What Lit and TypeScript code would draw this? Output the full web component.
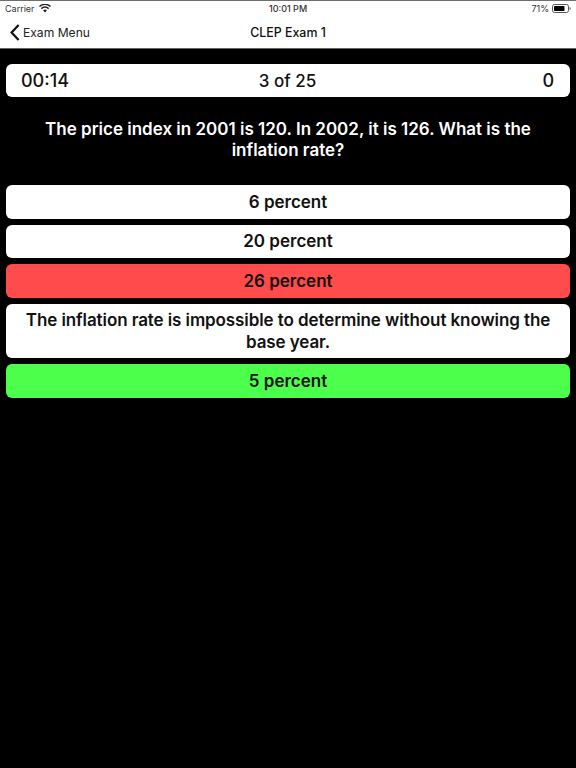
import { LitElement, html, css } from "lit";
import { customElement } from "lit/decorators.js";

@customElement("app-root")
export class AppRoot extends LitElement {
  static styles = css`
    :host { display: block; width: 576px; height: 768px; background: #000; font-family: Inter, "Liberation Sans", sans-serif; color: #000; overflow: hidden; }
    .top { background: #fff; border-top: 1px solid #6e6e6e; border-bottom: 1px solid #666; height: 47px; box-sizing: content-box; display: flex; flex-direction: column; }
    .status { height: 15px; display: grid; grid-template-columns: 1fr auto 1fr; align-items: center; padding: 0 5px; font-size: 9px; color: #333; }
    .status .l { display: flex; align-items: center; gap: 4px; }
    .status .r { display: flex; align-items: center; justify-content: flex-end; gap: 3px; }
    .status .t { font-weight: 500; }
    .nav { flex: 1; display: grid; grid-template-columns: 1fr auto 1fr; align-items: center; padding: 0 10px; font-size: 12.1px; }
    .back { display: flex; align-items: center; gap: 3px; color: #222; }
    .title { font-weight: 500; font-size: 12.4px; color: #111; }
    .main { padding: 15px 6px 0; display: flex; flex-direction: column; }
    .score { background: #fff; border-radius: 6px; height: 33px; display: grid; grid-template-columns: 1fr auto 1fr; align-items: center; padding: 0 16px 0 15px; font-size: 17px; font-weight: 500; color: #111; }
    .score .time { font-size: 18px; }
    .score .end { text-align: right; font-size: 18px; }
    .question { color: #fff; font-size: 17px; font-weight: 600; line-height: 21px; text-align: center; padding: 22px 20px 24px; }
    .answers { display: flex; flex-direction: column; gap: 6px; }
    .a { background: #fff; border-radius: 6px; min-height: 33.600px; box-sizing: border-box; padding: 6.500px 10px 6px; font-size: 17px; font-weight: 600; line-height: 21px; text-align: center; color: #111; display: flex; align-items: flex-start; justify-content: center; }
    .long { letter-spacing: -0.09px; line-height: 21.500px; padding-bottom: 5px; }
    .red { background: #ff4b4b; }
    .green { background: #4bff4b; }
  `;

  render() {
    return html`
      <div class="top">
        <div class="status">
          <div class="l">Carrier
            <svg width="12" height="9" viewBox="0 0 12 9"><path d="M6 8.600 4.100 6.400a2.800 2.800 0 0 1 3.800 0zM2.900 5.200 1.800 4a6.200 6.200 0 0 1 8.400 0L9.100 5.200a4.600 4.600 0 0 0-6.200 0zM.9 3 0 2a8.800 8.800 0 0 1 12 0l-.9 1a7.500 7.500 0 0 0-10.200 0z" fill="#222"/></svg>
          </div>
          <div class="t">10:01 PM</div>
          <div class="r">71%
            <svg width="19" height="9" viewBox="0 0 19 9"><rect x=".5" y=".5" width="16" height="8" rx="2" fill="none" stroke="#555"/><rect x="2" y="2" width="10.500" height="5" rx=".8" fill="#000"/><path d="M17.600 3v3c.7-.2 1.100-.8 1.100-1.500s-.4-1.300-1.100-1.500z" fill="#555"/></svg>
          </div>
        </div>
        <div class="nav">
          <div class="back">
            <svg width="10" height="17" viewBox="0 0 10 17"><path d="M8.600 1 1.600 8.500l7 7.500" fill="none" stroke="#111" stroke-width="2.200"/></svg>
            Exam Menu
          </div>
          <div class="title">CLEP Exam 1</div>
          <div></div>
        </div>
      </div>
      <div class="main">
        <div class="score"><div class="time">00:14</div><div>3 of 25</div><div class="end">0</div></div>
        <div class="question">The price index in 2001 is 120. In 2002, it is 126. What is the inflation rate?</div>
        <div class="answers">
          <div class="a">6 percent</div>
          <div class="a">20 percent</div>
          <div class="a red">26 percent</div>
          <div class="a long">The inflation rate is impossible to determine without knowing the base year.</div>
          <div class="a green">5 percent</div>
        </div>
      </div>
    `;
  }
}
